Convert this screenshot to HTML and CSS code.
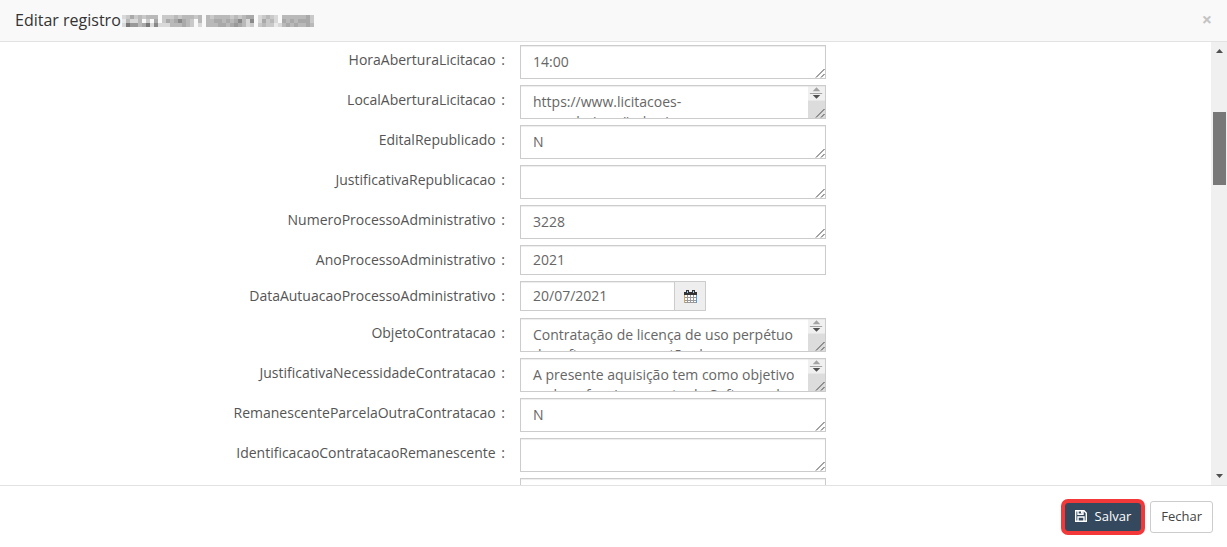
FILE: index.html
```
<!DOCTYPE html>
<html lang="pt-BR">
<head>
<meta charset="utf-8" />
<meta name="viewport" content="width=device-width, initial-scale=1" />
<title>Editar registro</title>
<link rel="stylesheet" href="styles.css">
</head>
<body>
<!-- shared icons -->
<svg class="sprite" aria-hidden="true">
<symbol id="grip" viewBox="0 0 10 10"><path d="M1 9.500 9.500 1M6 9.500 9.500 6" stroke="#444" stroke-width="1" fill="none" /></symbol>
<symbol id="spin" viewBox="0 0 18 15"><path fill="#f0f0f0" d="M0 0h18v15H0z" /><path fill="#a3a3a3" d="M9 1l4 4H5zM2 7h13v1H2z" /><path fill="#505050" d="M5 9h8l-4 4z" /></symbol>
</svg>
<div class="modal" role="dialog" aria-labelledby="title">
<header class="modal-header">
<h1 id="title">Editar registro
<svg class="redacted" id="redacted" viewBox="0 0 48 3" shape-rendering="crispEdges" role="img" aria-label="Identificador oculto"></svg>
</h1>
<button type="button" class="close" aria-label="Fechar janela">×</button>
</header>

<div class="modal-body">
<form class="fields" id="registro">
<div class="row"><label for="hora">HoraAberturaLicitacao <span>:</span></label><div class="area"><textarea id="hora">14:00</textarea><svg class="grip"><use href="#grip" /></svg></div></div>
<div class="row"><label for="local">LocalAberturaLicitacao <span>:</span></label><div class="area scroll"><textarea id="local">https://www.licitacoes-
e.com.br/aop/index.jsp</textarea><span class="track"><svg class="spin"><use href="#spin" /></svg></span><svg class="grip"><use href="#grip" /></svg></div></div>
<div class="row"><label for="edital">EditalRepublicado <span>:</span></label><div class="area"><textarea id="edital">N</textarea><svg class="grip"><use href="#grip" /></svg></div></div>
<div class="row"><label for="justrep">JustificativaRepublicacao <span>:</span></label><div class="area"><textarea id="justrep"></textarea><svg class="grip"><use href="#grip" /></svg></div></div>
<div class="row"><label for="numero">NumeroProcessoAdministrativo <span>:</span></label><div class="area"><textarea id="numero">3228</textarea><svg class="grip"><use href="#grip" /></svg></div></div>
<div class="row"><label for="ano">AnoProcessoAdministrativo <span>:</span></label><input type="text" id="ano" value="2021" /></div>
<div class="row"><label for="data">DataAutuacaoProcessoAdministrativo <span>:</span></label><div class="date"><input type="text" id="data" value="20/07/2021" /><button type="button" aria-label="Abrir calendário"><svg width="13" height="13" viewBox="0 0 13 13"><path fill="#fff" d="M1 5h11v7H1z" /><path fill="#333" d="M0 2h2V0h3v2h3V0h3v2h2v3H0z" /><path fill="#9cc8ee" d="M3 1h1v2H3zM9 1h1v2H9z" /><path stroke="#999" fill="none" d="M3.500 5v7M6.500 5v7M9.500 5v7M1 7.500h11M1 10.500h11M0 12.500h13" /><path stroke="#d9a066" d="M.5 5v8" /><path stroke="#5b9bd5" d="M12.500 5v8" /></svg></button></div></div>
<div class="row"><label for="objeto">ObjetoContratacao <span>:</span></label><div class="area scroll"><textarea id="objeto">Contratação de licença de uso perpétuo de software para gestão de</textarea><span class="track"><svg class="spin"><use href="#spin" /></svg></span><svg class="grip"><use href="#grip" /></svg></div></div>
<div class="row"><label for="justnec">JustificativaNecessidadeContratacao <span>:</span></label><div class="area scroll"><textarea id="justnec">A presente aquisição tem como objetivo o pleno funcionamento do Software de</textarea><span class="track"><svg class="spin"><use href="#spin" /></svg></span><svg class="grip"><use href="#grip" /></svg></div></div>
<div class="row"><label for="reman">RemanescenteParcelaOutraContratacao <span>:</span></label><div class="area"><textarea id="reman">N</textarea><svg class="grip"><use href="#grip" /></svg></div></div>
<div class="row"><label for="ident">IdentificacaoContratacaoRemanescente <span>:</span></label><div class="area"><textarea id="ident"></textarea><svg class="grip"><use href="#grip" /></svg></div></div>
<div class="row"><span></span><div class="area"><textarea aria-label="Próximo campo"></textarea></div></div>
</form>
<div class="scrollbar" aria-hidden="true">
<svg width="7" height="4" viewBox="0 0 7 4"><path fill="#505050" d="M0 4 3.500 0 7 4z" /></svg>
<span class="thumb"></span>
<svg width="7" height="4" viewBox="0 0 7 4"><path fill="#505050" d="M0 0h7L3.500 4z" /></svg>
</div>
</div>

<footer class="modal-footer">
<button type="submit" form="registro" class="btn btn-save"><svg width="12" height="12" viewBox="0 0 12 12"><path fill="none" stroke="#fff" stroke-width="1.400" d="M.7.7h8.300l2.300 2.300v8.300H.7zM3 .7v3.500h5V.7M3 11V7h6v4" /><path fill="#fff" d="M6 1h1.500v2.500H6z" /></svg>Salvar</button>
<button type="button" class="btn">Fechar</button>
</footer>
</div>

<script>
(function(){
// gray level of each block of the masked identifier, 0 = empty
const rows = [
'235343444033343444340434444343455023432044444453',
'142240305035457543040445545457427025342054545553',
'286645827222444543020444554565423034331245454454'
];
const svg = document.getElementById('redacted');
rows.forEach((row, y) => {
[...row].forEach((n, x) => {
if (n === '0') return;
const rect = document.createElementNS('http://www.w3.org/2000/svg', 'rect');
const gray = 249 - n * 16;
rect.setAttribute('x', x);
rect.setAttribute('y', y);
rect.setAttribute('width', 1);
rect.setAttribute('height', 1);
rect.setAttribute('fill', `rgb(${gray},${gray},${gray})`);
svg.appendChild(rect);
});
});
})();
</script>
</body>
</html>
```

FILE: styles.css
```
* {
box-sizing: border-box;
}
body {
margin: 0;
font-family: "Open Sans", sans-serif;
font-size: 14px;
line-height: 20px;
color: #555;
background: #fff;
}
.sprite {
display: none;
}
.modal {
display: flex;
flex-direction: column;
height: 100vh;
}
.modal-header {
display: flex;
justify-content: space-between;
align-items: flex-start;
padding: 10px 15px;
background: #f9f9f9;
border-bottom: 1px solid #e2e2e2;
}
h1 {
display: flex;
align-items: center;
gap: 1px;
margin: 0;
font-size: 16px;
line-height: 21px;
font-weight: 500;
color: #333;
}
.redacted {
width: 192px;
height: 12px;
}
.close {
padding: 0;
border: 0;
background: none;
font: 700 18px/18px "Open Sans", sans-serif;
color: #c4c4c4;
}
.modal-body {
flex: 1;
min-height: 0;
display: flex;
overflow: hidden;
}
.fields {
flex: 1;
display: flex;
flex-direction: column;
gap: 6px;
padding-top: 3px;
}
.row {
display: grid;
grid-template-columns: 520fr 306fr 385fr;
}
label {
padding: 5px 15px 0 0;
text-align: right;
}
label span {
margin-left: 2px;
}
.area {
position: relative;
height: 34px;
}
textarea,
input {
display: block;
width: 100%;
margin: 0;
border: 1px solid #ccc;
border-radius: 0;
background: #fff;
box-shadow: inset 0 1px 1px rgba(0, 0, 0, 0.075);
font: 14px/20px "Open Sans", sans-serif;
color: #666;
}
textarea {
height: 34px;
padding: 6px 12px;
resize: none;
overflow: hidden;
}
.scroll textarea {
padding-right: 29px;
}
input {
height: 30px;
padding: 3px 12px 5px;
}
.grip {
position: absolute;
right: 1px;
bottom: 1px;
width: 10px;
height: 10px;
}
.track {
position: absolute;
top: 1px;
right: 1px;
bottom: 1px;
width: 17px;
background: #dcdcdc;
}
.spin {
display: block;
width: 17px;
height: 15px;
}
.date {
display: flex;
width: 186px;
margin-bottom: 1px;
}
.date input {
flex: 1;
min-width: 0;
}
.date button {
display: flex;
align-items: center;
justify-content: center;
width: 31px;
padding: 0;
border: 1px solid #ccc;
border-left: 0;
background: #eee;
}
.scrollbar {
display: flex;
flex-direction: column;
align-items: center;
width: 16px;
padding: 7px 0;
background: #f0f0f0;
}
.thumb {
width: 13px;
height: 17%;
margin: 59px 0 auto;
background: #787878;
}
.modal-footer {
display: flex;
align-items: center;
justify-content: flex-end;
gap: 9px;
padding: 15px 14px 14px;
border-top: 1px solid #e2e2e2;
}
.btn {
display: flex;
align-items: center;
gap: 8px;
height: 32px;
padding: 0 10px 2px;
border: 1px solid #ccc;
border-radius: 3px;
background: #fff;
font: 13px/20px "Open Sans", sans-serif;
color: #444;
}
.btn-save {
height: 28px;
padding: 0 9px 2px;
border-color: #34495e;
background: #34495e;
font-weight: 500;
color: #fff;
box-shadow: 0 0 0 4px #f23838;
}
```
